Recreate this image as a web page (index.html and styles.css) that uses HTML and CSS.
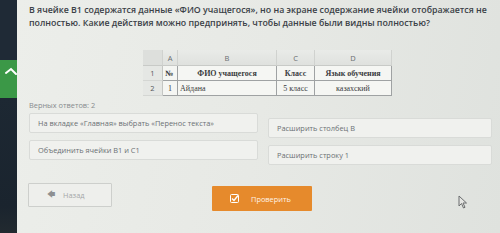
FILE: index.html
```html
<!DOCTYPE html>
<html lang="ru">
<head>
<meta charset="utf-8">
<link rel="stylesheet" href="styles.css">
</head>
<body>
<div class="page">
  <aside class="sidebar">
    <div class="side-top"></div>
    <div class="side-btn">
      <svg width="17" height="38" viewBox="0 0 17 38"><path d="M6 13 L11 9 L16 14" fill="none" stroke="#fff" stroke-width="2" stroke-linecap="round"/></svg>
    </div>
    <div class="side-rest"></div>
  </aside>
  <main class="main">
    <p class="question">В ячейке B1 содержатся данные «ФИО учащегося», но на экране содержание ячейки отображается не полностью. Какие действия можно предпринять, чтобы данные были видны полностью?</p>
    <div class="sheet-wrap">
      <div class="sheet">
        <div class="hd corner"></div>
        <div class="hd">A</div>
        <div class="hd">B</div>
        <div class="hd">C</div>
        <div class="hd">D</div>
        <div class="rn">1</div>
        <div class="c b">№</div>
        <div class="c b ctr">ФИО учащегося</div>
        <div class="c b ctr">Класс</div>
        <div class="c b ctr">Язык обучения</div>
        <div class="rn">2</div>
        <div class="c ctr">1</div>
        <div class="c">Айдана</div>
        <div class="c ctr">5 класс</div>
        <div class="c ctr">казахский</div>
      </div>
    </div>
    <div class="correct">Верных ответов: 2</div>
    <div class="options">
      <div class="col">
        <div class="opt">На вкладке «Главная» выбрать «Перенос текста»</div>
        <div class="opt">Объединить ячейки B1 и C1</div>
      </div>
      <div class="col right">
        <div class="opt">Расширить столбец B</div>
        <div class="opt">Расширить строку 1</div>
      </div>
    </div>
    <div class="actions">
      <button class="btn back"><span class="arrow">&#129092;</span>Назад</button>
      <button class="btn check">
        <svg width="9" height="9" viewBox="0 0 9 9"><rect x="0.5" y="0.5" width="8" height="8" rx="1" fill="none" stroke="#fff" stroke-width="1"/><path d="M2 4.5 L4 6.5 L8 1.5" fill="none" stroke="#fff" stroke-width="1.4"/></svg>
        Проверить
      </button>
    </div>
  </main>
  <svg class="cursor" width="10" height="14" viewBox="0 0 10 14"><path d="M1 1 L1 11 L3.5 8.5 L5.5 13 L7 12.3 L5 8 L8.5 8 Z" fill="#e4e5e2" stroke="#6a6d6e" stroke-width="1"/></svg>
</div>
</body>
</html>
```
FILE: styles.css
```css
* { box-sizing: border-box; }
html, body { margin: 0; padding: 0; }
body {
  width: 500px;
  height: 233px;
  overflow: hidden;
  font-family: "Open Sans", "Noto Sans", sans-serif;
  background: #e5e7e3;
}
.page {
  position: relative;
  display: flex;
  width: 500px;
  height: 233px;
}
.sidebar {
  width: 17px;
  flex: none;
  display: flex;
  flex-direction: column;
  background: #1f2a36;
}
.side-top { height: 60px; }
.side-btn {
  height: 38px;
  background: #3b9847;
}
.side-btn svg { display: block; }
.side-rest { flex: 1; background: linear-gradient(#1d2833, #1a242e 80%, #222a30); }
.main {
  flex: 1;
  min-width: 0;
  padding: 4px 6px 0 12px;
  background: linear-gradient(100deg, #eceeea 0%, #e7e9e5 50%, #dfe2de 100%);
}
.question {
  margin: 0;
  font-size: 8.8px;
  font-weight: 600;
  line-height: 13px;
  color: #3b4147;
}
.sheet-wrap {
  margin: 20px 0 0 114px;
}
.sheet {
  display: grid;
  grid-template-columns: 20px 15px 99px 38px 77px;
  grid-template-rows: 16px 15px 15px;
  width: 249px;
  font-family: "Liberation Serif", "Times New Roman", serif;
  font-size: 8px;
  color: #3a3c3e;
  background: #f1f2ef;
}
.hd {
  font-family: "Open Sans", sans-serif;
  font-size: 7.5px;
  color: #6a6d70;
  display: flex;
  align-items: center;
  justify-content: center;
  background: linear-gradient(#e9ebe8, #dfe1de);
  border-right: 1px solid #d0d2cf;
  border-bottom: 1px solid #c8cac7;
}
.hd.corner { background: #dddfdc; }
.rn {
  font-family: "Open Sans", sans-serif;
  font-size: 7.5px;
  color: #55585b;
  display: flex;
  align-items: center;
  justify-content: center;
  background: #e5e7e4;
  border-right: 1px solid #c4c6c3;
  border-bottom: 1px solid #d4d6d3;
}
.c {
  display: flex;
  align-items: center;
  padding: 0 2px;
  border-right: 1px solid #9fa2a3;
  border-bottom: 1px solid #9fa2a3;
  background: #f5f6f3;
  white-space: nowrap;
  color: #3a3c3e;
}
.c.b { font-weight: bold; }
.c.ctr { justify-content: center; }
.correct {
  margin-top: 3px;
  font-size: 7.4px;
  color: #878b8e;
  line-height: 12px;
}
.options {
  display: grid;
  grid-template-columns: 229px 224px;
  column-gap: 10px;
  margin-top: 2px;
}
.col {
  display: flex;
  flex-direction: column;
  gap: 7px;
}
.col.right { padding-top: 5px; }
.opt {
  height: 20px;
  display: flex;
  align-items: center;
  padding: 0 8px;
  font-size: 7.4px;
  color: #6b7074;
  background: #f0f1ee;
  border: 1px solid #d9dbd8;
  border-radius: 2px;
  white-space: nowrap;
}
.actions {
  display: flex;
  align-items: flex-start;
  margin-top: 18px;
}
.btn {
  font-family: "Open Sans", sans-serif;
  font-size: 7.4px;
  display: flex;
  align-items: center;
  border-radius: 1px;
}
.back {
  width: 84px;
  height: 24px;
  margin-left: -1px;
  padding: 0 0 0 18px;
  gap: 8px;
  background: #eeefec;
  border: 1px solid #cdcfcc;
  color: #a4a7a8;
}
.arrow { font-size: 8px; color: #8d9092; font-family: "DejaVu Sans", sans-serif; }
.check {
  width: 100px;
  height: 25px;
  margin: 3px 0 0 100px;
  padding: 0 0 0 18px;
  gap: 12px;
  background: #e68a2c;
  border: none;
  color: #fff3e6;
}
.check svg { display: block; }
.cursor {
  position: absolute;
  left: 458px;
  top: 195px;
}
```
